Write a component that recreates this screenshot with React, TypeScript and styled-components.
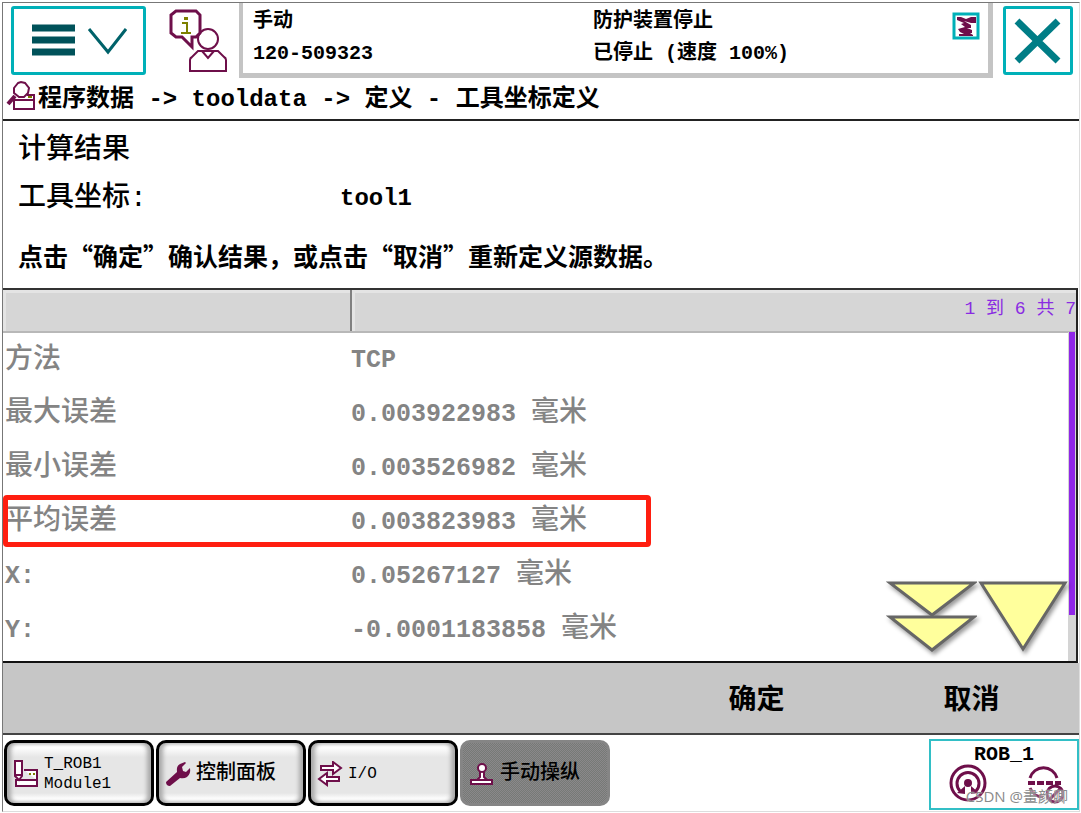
import React from 'react';
import styled, { createGlobalStyle } from 'styled-components';

const CJK = '"Liberation Mono", "Noto Sans CJK SC", monospace';
const PLUM = '#6e0f4a';
const TEAL = '#00b0b8';

const GlobalStyle = createGlobalStyle`
  *, *::before, *::after { box-sizing: border-box; }
  body { margin: 0; background: #fff; color: #000; font-family: ${CJK}; }
  button { font: inherit; color: inherit; cursor: pointer; padding: 0; }
  h1, p, dl, dd, dt { margin: 0; font-weight: inherit; }
`;

const Pendant = styled.div`
  display: flex;
  flex-direction: column;
  min-height: 100vh;
  padding: 2px 1px 1px 2px;
`;
const Frame = styled.div`
  flex: 1;
  display: flex;
  flex-direction: column;
  border: 1px solid #777;
  border-right-color: #ddd;
  border-bottom-color: #ddd;
`;
const TopBar = styled.header`
  display: flex;
  align-items: stretch;
  height: 75px;
  padding: 0 6px 0 8px;
`;
const TealButton = styled.button<{ $w: number }>`
  display: flex;
  align-items: center;
  justify-content: center;
  width: ${p => p.$w}px;
  flex: none;
  margin: 3px 0;
  background: #fff;
  border: 3px solid ${TEAL};
  border-radius: 3px;
`;
const OperatorIcon = styled.svg`
  flex: none;
  margin: 5px 10px 0 23px;
`;
const Status = styled.section`
  flex: 1;
  display: grid;
  grid-template-columns: 340px 1fr auto;
  margin-right: 10px;
  padding: 0 8px 0 10px;
  border: solid #c4c4c4;
  border-width: 0 5px 5px 4px;
  font-size: 20px;
  font-weight: 700;
  line-height: 32px;
`;
const StatusColumn = styled.div`
  padding-top: 3px;
  white-space: nowrap;
`;
const RobotBadge = styled.svg`
  margin-top: 9px;
`;
const Breadcrumb = styled.nav`
  display: flex;
  align-items: center;
  height: 43px;
  padding: 2px 0 0 3px;
  border-bottom: 2px solid #222;
  font-size: 24px;
  font-weight: 700;
  line-height: 40px;
  white-space: pre;
  svg { margin-top: -8px; }
`;
const Summary = styled.section`
  padding: 6px 15px 4px;
  height: 167px;
`;
const Title = styled.h1`
  font-size: 28px;
  font-weight: 500;
  line-height: 48px;
`;
const Field = styled.dl`
  display: grid;
  grid-template-columns: 322px 1fr;
  font-size: 28px;
  font-weight: 500;
  line-height: 48px;
  dd { font-size: 24px; font-weight: 700; }
`;
const Hint = styled.p`
  font-family: "Noto Sans CJK SC", sans-serif;
  font-size: 25px;
  font-weight: 700;
  line-height: 28px;
  padding-top: 18px;
  white-space: nowrap;
`;
const Results = styled.section`
  position: relative;
  display: flex;
  border-top: 2px solid #333;
  border-bottom: 2px solid #111;
  margin-right: 1px;
  border-right: 2px solid #222;
  flex: 1;
`;
const Table = styled.table`
  flex: 1;
  width: 100%;
  border-collapse: collapse;
  align-self: flex-start;
  table-layout: fixed;
  font-size: 28px;
  font-weight: 500;
  color: #848484;
`;
const HeadCell = styled.th<{ $w?: number }>`
  width: ${p => (p.$w ? `${p.$w}px` : 'auto')};
  height: 42px;
  padding: 0 0 4px;
  background: #d6d6d6;
  border-bottom: 2px solid #b8b8b8;
  border-right: ${p => (p.$w ? '2px solid #808080' : '0')};
  box-shadow: inset 3px 3px 0 #e4e4e4;
  color: #8a2be2;
  font-size: 18px;
  line-height: 24px;
  font-weight: 400;
  text-align: right;
  white-space: nowrap;
`;
const Cell = styled.td<{ $value?: boolean }>`
  height: 54px;
  padding: 2px 0 0 ${p => (p.$value ? 0 : 2)}px;
  line-height: 44px;
  white-space: nowrap;
`;
const Amount = styled.span`
  font-size: 25px;
  font-weight: 700;
  white-space: pre;
`;
const ScrollTrack = styled.div`
  position: absolute;
  top: 42px;
  right: 0;
  bottom: 0;
  width: 8px;
  padding: 0 1px;
  background: #d4d4d4;
`;
const ScrollThumb = styled.div`
  height: 86%;
  background: #8f26e8;
`;
const Highlight = styled.div`
  position: absolute;
  top: 205px;
  left: 0;
  width: 648px;
  height: 52px;
  border: 5px solid #ff1e10;
  border-radius: 4px;
`;
const Pager = styled.div`
  position: absolute;
  right: 8px;
  bottom: 3px;
  display: flex;
`;
const PageButton = styled.button`
  display: block;
  width: 91px;
  height: 78px;
  border: 0;
  background: none;
  svg { display: block; filter: drop-shadow(2px 3px 2px #0006); }
`;
const Actions = styled.div`
  display: flex;
  justify-content: flex-end;
  height: 72px;
  background: #c6c6c6;
  border-bottom: 2px solid #444;
`;
const Action = styled.button`
  width: 215px;
  padding-bottom: 2px;
  border: 0;
  background: none;
  font-size: 28px;
  font-weight: 700;
`;
const TaskBar = styled.footer`
  display: flex;
  gap: 2px;
  height: 76px;
  padding: 5px 0 0 1px;
`;
const Task = styled.button<{ $active?: boolean; $small?: boolean }>`
  display: flex;
  align-items: center;
  gap: 5px;
  width: 150px;
  height: 66px;
  padding: 2px 0 0 6px;
  text-align: left;
  font-size: ${p => (p.$small ? 16 : 20)}px;
  font-weight: 500;
  line-height: 20px;
  white-space: pre;
  border: 3px solid ${p => (p.$active ? '#858585' : '#000')};
  border-radius: 10px;
  background: ${p =>
    p.$active
      ? 'repeating-conic-gradient(#767a76 0 25%, #8b888b 0 50%) 0 0 / 2px 2px'
      : 'linear-gradient(#fff 4px, #e6e6e6 14px, #e6e6e6 50px, #fff 56px)'};
  box-shadow: ${p => (p.$active ? 'none' : 'inset 4px 0 4px #aaa, inset -4px 0 4px #aaa')};
`;
const RobotButton = styled.button`
  display: flex;
  flex-direction: column;
  align-items: center;
  width: 150px;
  height: 71px;
  margin: -1px 0 0 auto;
  border: 2px solid #32bfc6;
  background: #fff;
  font-size: 20px;
  font-weight: 700;
  line-height: 18px;
  padding-top: 5px;
`;
const Watermark = styled.span`
  position: absolute;
  right: 13px;
  bottom: 7px;
  font: 15px/20px "Open Sans", "Noto Sans CJK SC", sans-serif;
  color: #8a8a8a;
  text-shadow: 0 0 2px #fff;
  white-space: nowrap;
`;

const rows: [string, string, string][] = [
  ['方法', 'TCP', ''],
  ['最大误差', '0.003922983 ', '毫米'],
  ['最小误差', '0.003526982 ', '毫米'],
  ['平均误差', '0.003823983 ', '毫米'],
  ['X:', '0.05267127 ', '毫米'],
  ['Y:', '-0.0001183858 ', '毫米'],
];

export default function App() {
  return (
    <Pendant>
      <GlobalStyle />
      <Frame>
        <TopBar>
          <TealButton $w={135} aria-label="菜单">
            <svg width="96" height="36" viewBox="0 0 96 36" fill="none">
              <path d="M1 5h43M1 17h43M1 29h43" stroke="#00525a" strokeWidth="7" />
              <path d="M58 6l19 23 18-23" stroke="#00626a" strokeWidth="3" />
            </svg>
          </TealButton>
          <OperatorIcon width="60" height="64" viewBox="0 0 60 64" fill="none" stroke={PLUM}>
            <circle cx="39" cy="31" r="10" strokeWidth="2" />
            <path d="M21 63V52q0-2 2-3l6-6h20l6 6q2 1 2 3v11zM33 43l6 7 6-7" fill="#fff" strokeWidth="2" />
            <path d="M7 3h20l4 4v18l-4 4h-4v10l-10-10H7l-5-4V7z" fill="#fff" strokeWidth="3" />
            <path d="M13 15h5v10M12 25h10" stroke="#7d8000" strokeWidth="2" />
            <path d="M15 9h4v3h-4z" fill="#7d8000" stroke="none" />
          </OperatorIcon>
          <Status>
            <StatusColumn>
              <div>手动</div>
              <div>120-509323</div>
            </StatusColumn>
            <StatusColumn>
              <div>防护装置停止</div>
              <div>已停止 (速度 100%)</div>
            </StatusColumn>
            <RobotBadge width="28" height="28" viewBox="0 0 28 28">
              <path d="M2 2h24v24H2z" fill="#fff" stroke={TEAL} strokeWidth="3" />
              <path d="M5 5h4l5 2 5-2h5v6h-5l-7-2 7 4v3h-4l5 2v3h-2l3 2v1H7v-2h5l-4-2-2-3 7-2-4-3 3-1-7-3z" fill={PLUM} />
            </RobotBadge>
          </Status>
          <TealButton $w={70} aria-label="关闭">
            <svg width="48" height="48" viewBox="0 0 48 48">
              <path d="M3 4l41 40M44 4L3 44" stroke="#007d86" strokeWidth="7" />
            </svg>
          </TealButton>
        </TopBar>
        <Breadcrumb>
          <svg width="32" height="32" viewBox="0 0 32 32" fill="none" stroke={PLUM} strokeWidth="2">
            <path d="M8 20v9h20V15h-7M8 20h20" />
            <path d="M22 17h4" stroke="#7d8000" />
            <path d="M9 16l-7 8" strokeWidth="4" />
            <path d="M12 3l3-1 4 1 4 5-1 5-4 4h-5l-5-4V8z" fill="#fff" />
          </svg>
          {'程序数据 -> tooldata -> 定义 - 工具坐标定义'}
        </Breadcrumb>
        <Summary>
          <Title>计算结果</Title>
          <Field>
            <dt>工具坐标:</dt>
            <dd>tool1</dd>
          </Field>
          <Hint>点击“确定”确认结果，或点击“取消”重新定义源数据。</Hint>
        </Summary>
        <Results>
          <Table>
            <thead>
              <tr>
                <HeadCell $w={348} aria-label="名称" />
                <HeadCell>1 到 6 共 7</HeadCell>
              </tr>
            </thead>
            <tbody>
              {rows.map(([label, amount, unit]) => (
                <tr key={label}>
                  <Cell>{/^[XY]/.test(label) ? <Amount>{label}</Amount> : label}</Cell>
                  <Cell $value><Amount>{amount}</Amount>{unit}</Cell>
                </tr>
              ))}
            </tbody>
          </Table>
          <Highlight />
          <ScrollTrack><ScrollThumb /></ScrollTrack>
          <Pager>
            <PageButton aria-label="最后一页">
              <svg width="91" height="78" viewBox="0 0 91 78" fill="#ffff9c" stroke="#666" strokeWidth="3">
                <path d="M4 3h84L46 35z" />
                <path d="M4 37h84L46 70z" />
              </svg>
            </PageButton>
            <PageButton aria-label="下一页">
              <svg width="91" height="78" viewBox="0 0 91 78" fill="#ffff9c" stroke="#666" strokeWidth="3">
                <path d="M4 3h84L46 69z" />
              </svg>
            </PageButton>
          </Pager>
        </Results>
        <Actions>
          <Action>确定</Action>
          <Action>取消</Action>
        </Actions>
        <TaskBar>
          <Task $small>
            <svg width="26" height="30" viewBox="0 0 26 30" fill="#fff" stroke={PLUM} strokeWidth="2">
              <path d="M11 11h13v16H3v-6h21" />
              <path d="M2 2h7v15l-3 4-4-4zM2 16h7" />
              <path d="M16 15h2M20 15h2" stroke="#7d8000" />
            </svg>
            {'T_ROB1\nModule1'}
          </Task>
          <Task>
            <svg width="26" height="26" viewBox="0 0 26 26" fill={PLUM}>
              <path d="M1 21L12 11q-1-6 3-8l5-2 1 1-4 4 1 4 3 1 4-4q1 6-3 9-3 2-7 1L5 25q-4 0-4-4z" />
            </svg>
            控制面板
          </Task>
          <Task $small>
            <svg width="26" height="26" viewBox="0 0 26 26" fill="#fff" stroke={PLUM} strokeWidth="2">
              <path d="M4 5h12V1l8 6-8 6V9H4z" />
              <path d="M22 16H10v-4l-8 6 8 6v-4h12z" />
            </svg>
            I/O
          </Task>
          <Task $active>
            <svg width="26" height="26" viewBox="0 0 26 26" fill="#fff" stroke={PLUM} strokeWidth="2">
              <path d="M11 10h4v6l3 3H8l3-3zM2 19h21v4H2z" />
              <circle cx="13" cy="7" r="4" />
            </svg>
            手动操纵
          </Task>
          <RobotButton>
            ROB_1
            <svg width="120" height="40" viewBox="0 0 120 40" fill="none" stroke={PLUM} strokeWidth="2">
              <circle cx="24" cy="19" r="17" strokeWidth="3" />
              <path d="M16 27A11 11 0 1 1 32 27" strokeWidth="3" />
              <path d="M13 29l8-7v8zM35 29l-8-7v8z" fill={PLUM} stroke="none" />
              <circle cx="24" cy="19" r="3" fill={PLUM} />
              <path d="M86 14a14 14 0 0 1 27 0M86 24q4 9 13 9" strokeWidth="3" />
              <path d="M84 19h33" strokeWidth="4" strokeDasharray="7 2" />
              <circle cx="111" cy="30" r="8" strokeWidth="3" />
              <path d="M105 36l12-12" strokeWidth="3" />
            </svg>
          </RobotButton>
        </TaskBar>
      </Frame>
      <Watermark>CSDN @畫颜卿</Watermark>
    </Pendant>
  );
}
